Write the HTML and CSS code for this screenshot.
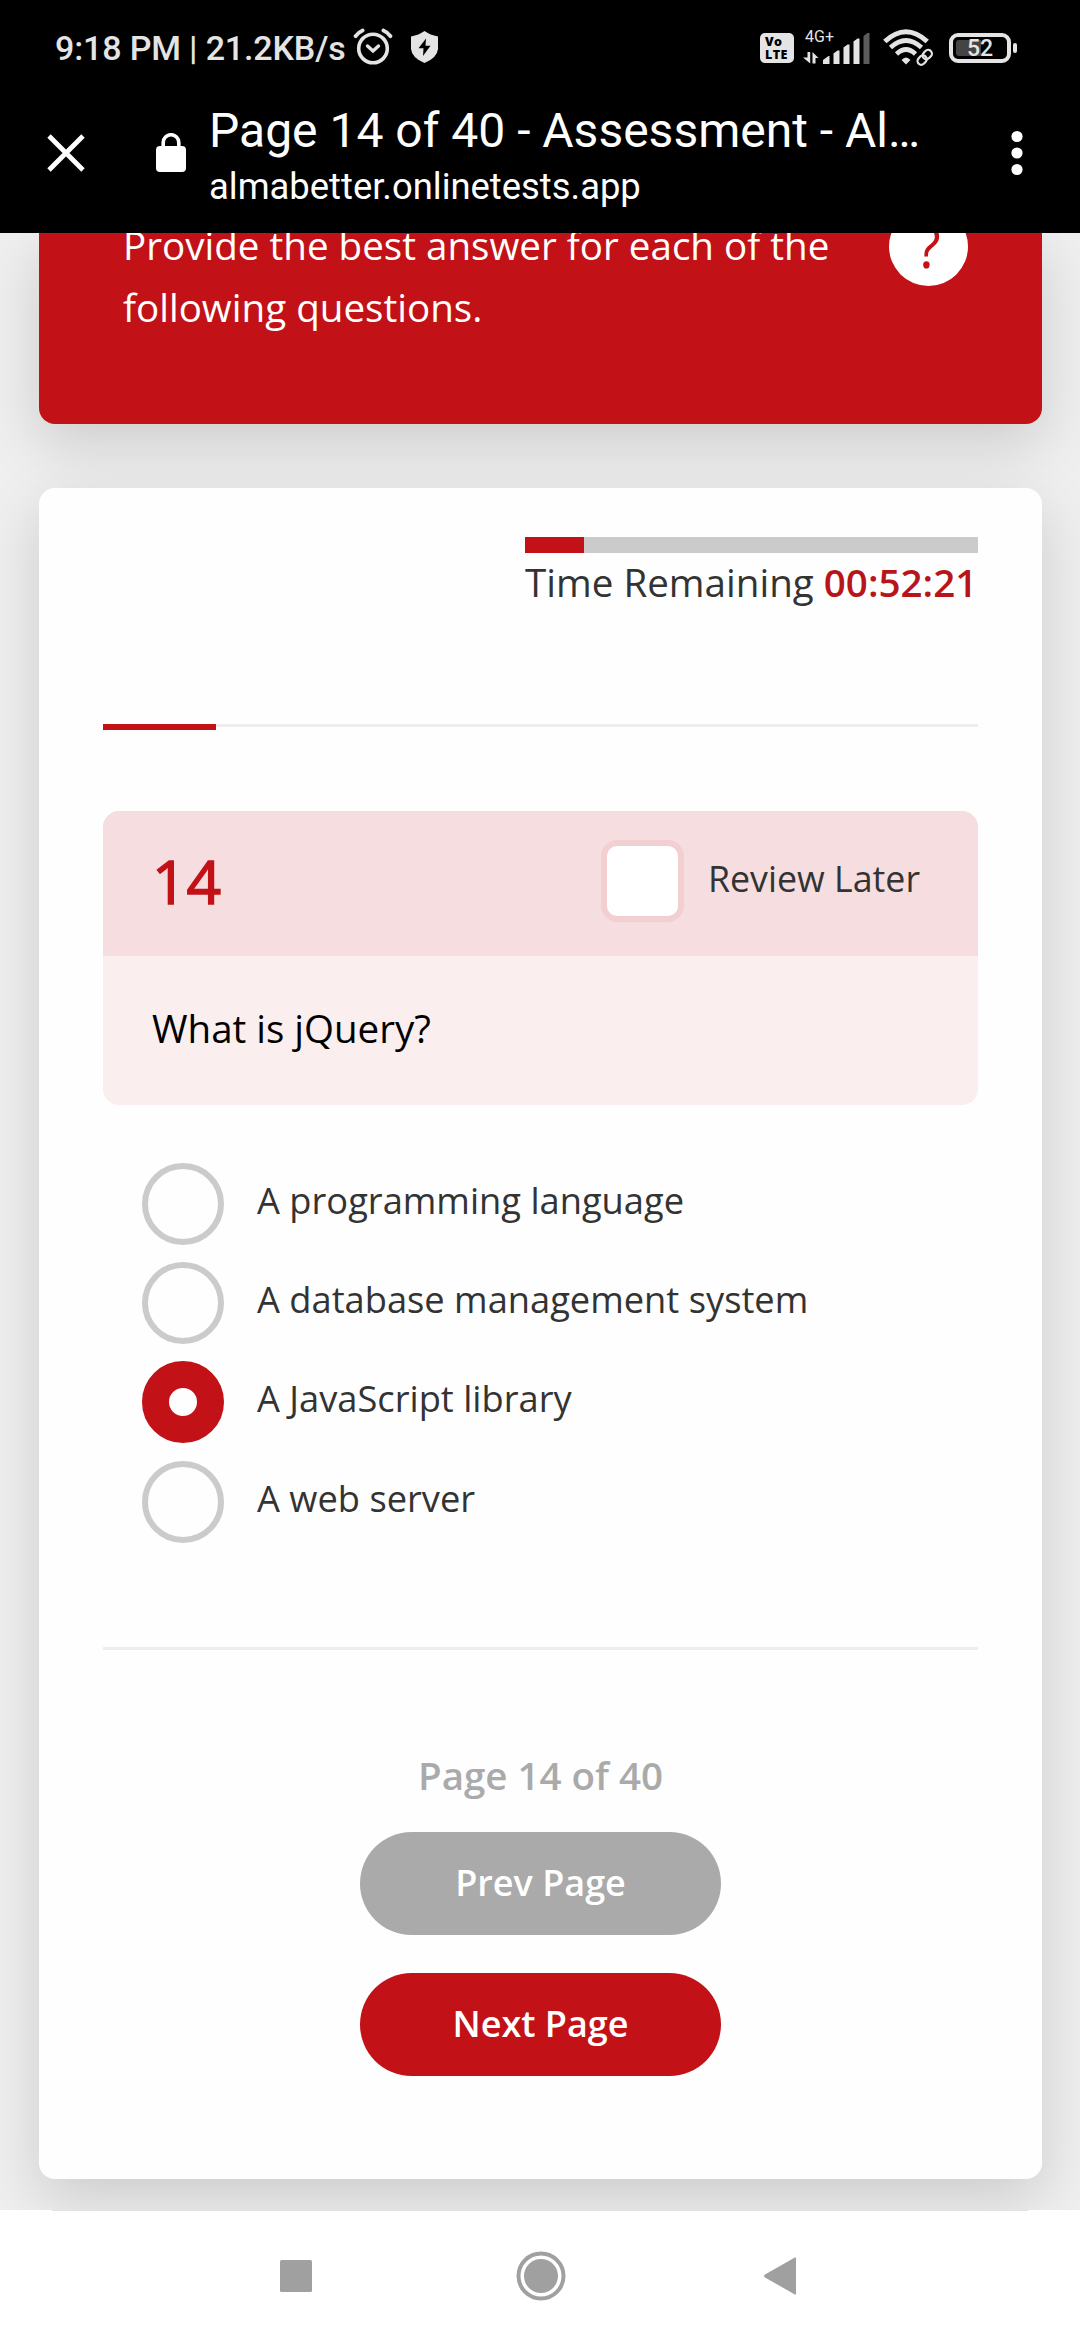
FILE: index.html
```html
<!DOCTYPE html>
<html lang="en">
<head>
<meta charset="utf-8">
<title>Page 14 of 40 - Assessment</title>
<link rel="stylesheet" href="styles.css">
</head>
<body>
<div class="screen">
  <header class="top">
    <div class="status">
      <span class="clock">9:18 PM | 21.2KB/s</span>
      <svg class="alarm" width="40" height="40" viewBox="0 0 40 40" fill="none" stroke="#e4e4e4" stroke-linecap="round">
        <circle cx="20" cy="21.500" r="14.300" stroke-width="3.600"/>
        <path d="M14.500 19l5.500 5 5.500-5" stroke-width="3.400"/>
        <path d="M2.600 9.200Q5.500 5 9.600 3.400M37.400 9.200Q34.500 5 30.400 3.400" stroke-width="3.800"/>
      </svg>
      <svg class="shield" width="27" height="32" viewBox="0 0 27 32">
        <path d="M13.500 0Q19 4 27 5.500V18Q26 27 13.500 32Q1 27 0 18V5.500Q8 4 13.500 0Z" fill="#e4e4e4"/>
        <path d="M15 7.500L7.500 17.200H12.500L12 25L19.500 14.800H14.500Z" fill="#000"/>
      </svg>
      <span class="volte"><b>Vo</b><b>LTE</b></span>
      <span class="cell">
        <span class="net">4G+</span>
        <svg width="68" height="32" viewBox="0 0 68 32" fill="#e4e4e4">
          <path d="M4.500 20h2.700v11.500L0 25.500h4.500zM9.500 20l6 6h-3v5.500h-3z"/>
          <path d="M20 32v-4l5.500-4h1V32zM30.500 32V21.500l4-3h2V32zM40.500 32V15.500l4-3h2V32zM50.500 32V9.500l4-3h2V32z"/>
          <path d="M60.500 32V4l4-3h2V32z" fill="#5c5c5c"/>
        </svg>
      </span>
      <svg class="wifi" width="50" height="38" viewBox="0 0 50 38" fill="none" stroke="#e4e4e4">
        <path d="M1.800 12.500Q23 -7 44.200 12.500" stroke-width="5"/>
        <path d="M7.500 18.500Q23 4.500 38.500 18.500" stroke-width="4.600"/>
        <path d="M13.500 25Q23 16 32.500 25" stroke-width="4.600"/>
        <path d="M18.500 31Q23 26 27.500 31L23 35.500Z" fill="#e4e4e4" stroke="none"/>
        <g stroke-width="2.200" transform="rotate(-47 41.500 28.500)">
          <rect x="33" y="24.800" width="10" height="7.500" rx="3.700"/>
          <rect x="40.500" y="24.800" width="10" height="7.500" rx="3.700"/>
        </g>
      </svg>
      <span class="battery"><span class="level">52</span></span>
    </div>
    <div class="toolbar">
      <svg class="close" width="38" height="38" viewBox="0 0 38 38" stroke="#fff" stroke-width="4.800"><path d="M2 2L36 36M36 2L2 36"/></svg>
      <svg class="lock" width="30" height="39" viewBox="0 0 30 39"><rect y="13" width="30" height="26" rx="4" fill="#fff"/><path d="M7.200 14V9.500a7.800 7.800 0 0 1 15.600 0V14" fill="none" stroke="#fff" stroke-width="3.600"/></svg>
      <div class="titles">
        <div class="title">Page 14 of 40 - Assessment - Al…</div>
        <div class="url">almabetter.onlinetests.app</div>
      </div>
      <svg class="menu" width="12" height="46" viewBox="0 0 12 46" fill="#fff"><circle cx="6" cy="6.500" r="5.600"/><circle cx="6" cy="23" r="5.600"/><circle cx="6" cy="39.500" r="5.600"/></svg>
    </div>
  </header>

  <main class="page">
    <section class="intro">
      <p class="intro-text">Provide the best answer for each of the following questions.</p>
      <span class="help">?</span>
    </section>

    <section class="card">
      <div class="timer">
        <div class="timer-bar"><div class="timer-fill"></div></div>
        <div class="timer-text">Time Remaining <b>00:52:21</b></div>
      </div>
      <div class="progress"><div class="progress-fill"></div></div>

      <div class="question">
        <div class="question-head">
          <span class="number">14</span>
          <span class="checkbox"></span>
          <span class="review">Review Later</span>
        </div>
        <div class="question-text">What is jQuery?</div>
      </div>

      <div class="answers">
        <div class="answer"><span class="radio"></span><span>A programming language</span></div>
        <div class="answer"><span class="radio"></span><span>A database management system</span></div>
        <div class="answer"><span class="radio checked"></span><span>A JavaScript library</span></div>
        <div class="answer"><span class="radio"></span><span>A web server</span></div>
      </div>

      <div class="rule"></div>
      <div class="count">Page 14 of 40</div>
      <div class="btn prev">Prev Page</div>
      <div class="btn next">Next Page</div>
    </section>
  </main>

  <nav class="nav">
    <svg width="34" height="34" viewBox="0 0 34 34"><rect x="1" y="1" width="32" height="32" rx="1.500" fill="#a0a0a0"/></svg>
    <svg class="home" width="50" height="50" viewBox="0 0 50 50"><circle cx="25" cy="25" r="22.500" fill="none" stroke="#a0a0a0" stroke-width="4"/><circle cx="25" cy="25" r="17" fill="#a0a0a0"/></svg>
    <svg width="34" height="40" viewBox="0 0 34 40"><path d="M33 2.500V37.500Q33 39.500 31 38L2 21.500Q0 20 2 18.500L31 2Q33 .5 33 2.500Z" fill="#a0a0a0"/></svg>
  </nav>
</div>
</body>
</html>
```
FILE: styles.css
```css
* { box-sizing: border-box; }
body { margin: 0; }
.screen {
  width: 1080px;
  height: 2340px;
  overflow: hidden;
  display: flex;
  flex-direction: column;
  background: #efefef;
  font-family: "Open Sans", sans-serif;
  color: #333;
  white-space: nowrap;
}

/* browser chrome */
.top {
  height: 233px;
  flex: none;
  background: #000;
  color: #fff;
  font-family: Roboto, sans-serif;
  z-index: 1;
}
.status {
  height: 95px;
  padding: 0 60px 0 55px;
  display: flex;
  align-items: center;
  color: #e4e4e4;
}
.clock { width: 298px; font-size: 34px; letter-spacing: -.15px; font-weight: 500; line-height: 40px; }
.alarm { margin-top: -2px; }
.shield { margin: -1px 322px 0 18px; }
.volte {
  width: 34px;
  height: 30px;
  border-radius: 5px;
  background: #e4e4e4;
  color: #000;
  display: flex;
  flex-direction: column;
  padding: 2px 0 0 5px;
  font: 700 12.500px/13px "Open Sans", sans-serif;
  letter-spacing: .4px;
}
.cell { width: 68px; margin-left: 9px; display: grid; }
.cell > * { grid-area: 1 / 1; }
.net { font-size: 16px; line-height: 16px; margin: -3px 0 0 2px; }
.wifi { margin-left: 12px; }
.battery {
  width: 62px;
  height: 30px;
  margin-left: 16px;
  border: 4px solid #e4e4e4;
  border-radius: 9px;
  padding: 3px;
  display: flex;
  position: relative;
}
.battery::after {
  content: "";
  position: absolute;
  left: 60px;
  top: 6px;
  width: 4px;
  height: 10px;
  border-radius: 2px;
  background: #e4e4e4;
}
.level {
  flex: 1;
  text-align: center;
  font-size: 23px;
  font-weight: 500;
  line-height: 18px;
  background: linear-gradient(90deg, #444 52%, transparent 52%);
  border-radius: 3px;
}
.toolbar { display: flex; padding: 0 57px 0 47px; height: 138px; }
.close { margin-top: 39px; }
.lock { margin: 38px 0 0 71px; }
.titles { flex: 1; margin-left: 23px; }
.title { font-size: 48px; line-height: 56px; margin-top: 8px; }
.url { font-size: 36.400px; line-height: 42px; margin-top: 7px; }
.menu { margin-top: 35px; }

/* page content */
.page {
  height: 1977px;
  flex: none;
  padding: 0 38px 0 39px;
  overflow: hidden;
}
.intro, .card { box-shadow: 0 20px 60px rgba(0, 0, 0, .15); }
.intro {
  height: 191px;
  background: #c21217;
  color: #fff;
  border-radius: 0 0 16px 16px;
  padding: 0 74px 0 84px;
  display: flex;
  justify-content: space-between;
}
.intro-text {
  width: 720px;
  margin: -18px 0 0;
  font-size: 38.600px;
  line-height: 61.600px;
  white-space: normal;
}
.help {
  width: 79px;
  height: 79px;
  margin-top: -26px;
  border-radius: 50%;
  background: #fff;
  color: #c21217;
  font-size: 56px;
  line-height: 79px;
  text-align: center;
}
.card {
  height: 1691px;
  margin-top: 64px;
  background: #fefefe;
  border-radius: 16px;
  padding: 49px 64px 0;
}
.timer { width: 453px; margin-left: auto; }
.timer-bar { height: 16px; background: #cbcbcb; }
.timer-fill { width: 13%; height: 16px; background: #c21217; }
.timer-text { font-size: 38.600px; line-height: 58px; }
.timer-text b { color: #b8151b; font-weight: 600; }
.progress { height: 3px; margin-top: 113px; background: #ededed; }
.progress-fill { width: 113px; height: 6px; background: #c21217; }
.question {
  height: 294px;
  margin-top: 84px;
  border-radius: 16px;
  overflow: hidden;
  background: #faeeee;
}
.question-head {
  height: 145px;
  padding: 0 58px 0 49px;
  display: flex;
  background: #f6dee0;
}
.number { flex: 1; font-size: 60.500px; line-height: 82px; margin-top: 29px; font-weight: 400; -webkit-text-stroke: 1.500px #c21217; color: #c21217; }
.checkbox {
  width: 83px;
  height: 82px;
  margin: 29px 24px 0 0;
  border: 6px solid #f2cfd1;
  border-radius: 16px;
  background: #fff;
}
.review { font-size: 35.750px; line-height: 50px; margin-top: 42px; }
.question-text { padding: 46px 49px; font-size: 38.500px; line-height: 52px; color: #000; }
.answers { display: grid; gap: 17.200px; margin: 58px 0 0 39px; }
.answer { display: flex; gap: 33px; height: 82px; font-size: 36.250px; line-height: 75px; }
.radio { width: 82px; height: 82px; border: 6px solid #cbcbcb; border-radius: 50%; }
.radio.checked { border: 27px solid #c21217; }
.rule { height: 3px; margin-top: 104.600px; background: #ededed; }
.count { margin-top: 99px; text-align: center; font-size: 38.500px; line-height: 52px; font-weight: 600; color: #aaa; }
.btn {
  width: 361px;
  height: 103px;
  margin: 0 auto 38px;
  border-radius: 52px;
  color: #fff;
  font-size: 36px;
  line-height: 101px;
  font-weight: 600;
  text-align: center;
}
.prev { margin-top: 31px; background: #aaa; }
.next { background: #c21217; }

/* system navigation */
.nav {
  flex: 1;
  background: linear-gradient(#e2e2e2, #e2e2e2) center top / 976px 1px no-repeat #fff;
  padding: 1px 283px 0 279px;
  display: flex;
  align-items: center;
  justify-content: space-between;
}
.home { margin-left: 5px; }
```
